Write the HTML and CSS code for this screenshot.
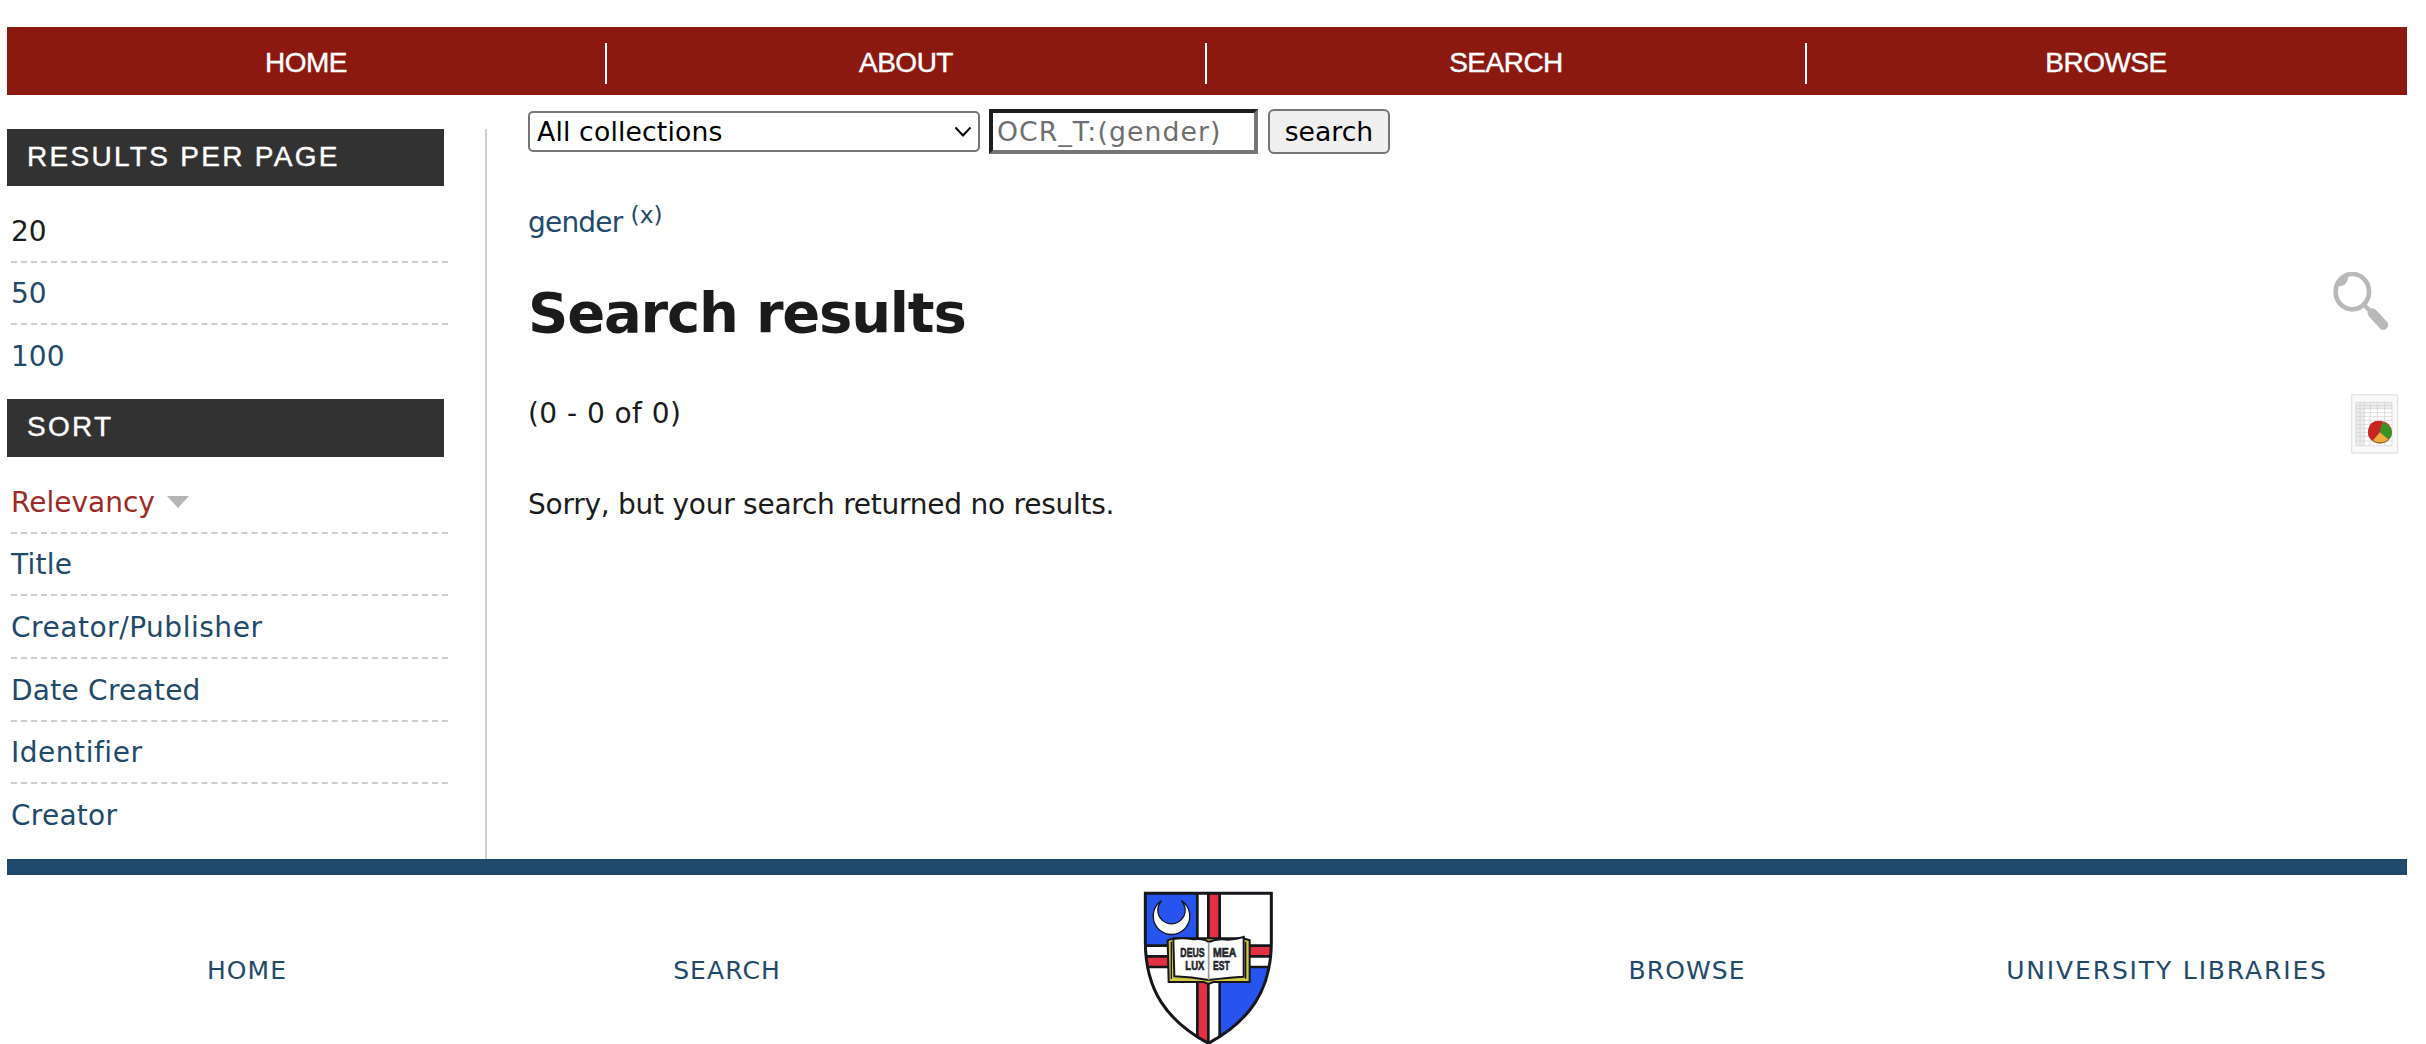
FILE: index.html
```html
<!DOCTYPE html>
<html lang="en">
<head>
<meta charset="utf-8">
<title>Search results</title>
<link rel="stylesheet" href="styles.css">
</head>
<body>
<nav class="top-nav">
  <a href="#">HOME</a><a href="#">ABOUT</a><a href="#">SEARCH</a><a href="#">BROWSE</a>
</nav>
<div class="page">
  <aside class="sidebar">
    <h2 class="bar">RESULTS PER PAGE</h2>
    <ul class="list list-count">
      <li class="plain">20</li>
      <li><a href="#">50</a></li>
      <li><a href="#">100</a></li>
    </ul>
    <h2 class="bar bar-sort">SORT</h2>
    <ul class="list list-sort">
      <li><a href="#" class="current">Relevancy</a><span class="arrow"></span></li>
      <li><a href="#">Title</a></li>
      <li><a href="#" class="wide">Creator/Publisher</a></li>
      <li><a href="#">Date Created</a></li>
      <li><a href="#" class="wide">Identifier</a></li>
      <li><a href="#">Creator</a></li>
    </ul>
  </aside>
  <main class="main">
    <form class="search-form">
      <div class="select" role="combobox" aria-label="Collection"><span>All collections</span>
        <svg width="18" height="12" viewBox="0 0 18 12"><path d="M1.5 1.5 9 9.5 16.5 1.5" fill="none" stroke="#000" stroke-width="2"/></svg>
      </div>
      <input class="query" type="text" placeholder="OCR_T:(gender)">
      <button class="submit" type="button">search</button>
    </form>
    <p class="term"><a href="#">gender <sup>(x)</sup></a></p>
    <h1>Search results</h1>
    <p class="range">(0 - 0 of 0)</p>
    <p class="message">Sorry, but your search returned no results.</p>
  </main>
  <div class="tools">
    <svg class="tool-search" width="60" height="60" viewBox="66 65 180 180">
      <g fill="none" stroke="#b8baba">
        <ellipse cx="127" cy="124" rx="50" ry="53" stroke-width="14"/>
        <path d="M163 164 186 188" stroke-width="12"/>
        <path d="M187 188 220 224" stroke-width="29" stroke-linecap="round"/>
      </g>
      <path d="M80 103C90 84 102 76 117 74Q115 82 113 88Q109 102 97 106Q88 109 82 107Z" fill="#b8baba"/>
    </svg>
    <svg class="tool-chart" width="50" height="62" viewBox="121 432 150 186">
      <rect x="126" y="437" width="138" height="175" rx="3" fill="#f9f9f9" stroke="#e4e4e4" stroke-width="4"/>
      <rect x="138" y="459" width="109" height="131" fill="#fff"/>
      <path d="M138 460h26v130h-26zM138 460h109v19H138z" fill="#ededed"/>
      <path d="M139 460v130M151 460v130M164 460v130M182 460v130M203 460v130M225 460v130M247 460v130M138 460h109M138 470h109M138 479h109M138 491h109M138 502h109M138 514h109M138 526h109M138 538h109M138 550h109M138 562h109M138 576h109M138 590h109" stroke="#cfcfcf" stroke-width="2"/>
      <ellipse cx="211" cy="550" rx="36" ry="34" fill="#8d642b"/>
      <path d="M211 548 217 516Q180 512 176 542V557Q178 568 190 575Z" fill="#c92323"/>
      <path d="M211 548 219 522Q248 533 246 554Q244 566 235 571Z" fill="#319522"/>
      <path d="M211 550 236 571Q228 580 212 580Q197 580 190 574Z" fill="#efac3a"/>
    </svg>
  </div>
</div>
<footer class="footer">
  <a href="#">HOME</a>
  <a href="#">SEARCH</a>
  <svg class="crest" width="180" height="169" viewBox="-9 15 540 507">
    <defs><clipPath id="shield"><path d="M76 70H454V215C454 360 390 452 265 520C140 452 76 360 76 215Z"/></clipPath></defs>
    <g clip-path="url(#shield)">
      <rect x="70" y="60" width="390" height="465" fill="#fff"/>
      <path d="M70 60H232V227H70zM299 291H460V525H299z" fill="#2754ef"/>
      <path d="M265 60H299V227H265zM232 330H265V525H232zM70 259H160V291H70zM370 227H460V259H370z" fill="#e23142"/>
      <path d="M232 60V227M265 60V227M299 60V227M232 330V525M265 330V525M299 330V525M70 227H160M70 259H160M70 291H160M370 227H460M370 259H460M370 291H460" fill="none" stroke="#15171c" stroke-width="8"/>
    </g>
    <path d="M76 70H454V215C454 360 390 452 265 520C140 452 76 360 76 215Z" fill="none" stroke="#15171c" stroke-width="9"/>
    <path d="M125 92A55 55 0 1 0 184 92A41 41 0 1 1 125 92Z" fill="#fff" stroke="#15171c" stroke-width="4"/>
    <path d="M143 211 160 205H370L389 211V336H280L265 342 250 336H146Z" fill="#d2ca42" stroke="#15171c" stroke-width="6"/>
    <path d="M154 215V326M377 215V326" stroke="#15171c" stroke-width="4"/>
    <path d="M160 207Q190 202 220 208Q250 204 266 216Q290 204 325 209Q350 208 371 201V320Q325 322 266 330Q215 321 163 319Z" fill="#fff" stroke="#15171c" stroke-width="6"/>
    <path d="M266 216V330" stroke="#999" stroke-width="5"/>
    <g class="motto">
      <text x="181" y="261" textLength="73" lengthAdjust="spacingAndGlyphs">DEUS</text>
      <text x="196" y="300" textLength="57" lengthAdjust="spacingAndGlyphs">LUX</text>
      <text x="279" y="261" textLength="70" lengthAdjust="spacingAndGlyphs">MEA</text>
      <text x="279" y="300" textLength="50" lengthAdjust="spacingAndGlyphs">EST</text>
    </g>
  </svg>
  <a href="#">BROWSE</a>
  <a href="#" class="libraries">UNIVERSITY LIBRARIES</a>
</footer>
</body>
</html>
```
FILE: styles.css
```css
* { box-sizing: border-box; }
body {
  margin: 0;
  padding: 27px 19px 0 7px;
  height: 1044px;
  overflow: hidden;
  background: #fff;
  color: #1b1b1b;
  font: 28px/60px Verdana, "DejaVu Sans", sans-serif;
}
a { color: #1f4a6c; text-decoration: none; }
h1, h2, p, ul { margin: 0; padding: 0; }

.top-nav {
  display: flex;
  height: 68px;
  padding-top: 16px;
  background: #8c1910;
  font-family: "Liberation Sans", Arial, sans-serif;
  letter-spacing: -0.5px;
  -webkit-text-stroke: 0.4px #fff;
}
.top-nav a {
  width: 600px;
  height: 41px;
  line-height: 39px;
  border-right: 2px solid #fff;
  color: #fff;
  text-align: center;
}
.top-nav a:last-child { border-right-color: transparent; }

.page {
  display: grid;
  grid-template-columns: 480px 1fr 96px;
  height: 764px;
}
.sidebar {
  margin-top: 34px;
  border-right: 2px solid #cfcfca;
}
.bar {
  width: 437px;
  height: 57px;
  padding-left: 20px;
  background: #323232;
  color: #fff;
  font: 28px/56px "Liberation Sans", Arial, sans-serif;
  letter-spacing: 2.3px;
  -webkit-text-stroke: 0.4px #fff;
}
.bar-sort { height: 58px; }
.list {
  width: 437px;
  margin-left: 4px;
  padding-top: 14px;
  list-style: none;
}
.list-count { height: 213px; }
.list-sort { letter-spacing: 0.25px; }
.list li {
  display: flex;
  align-items: center;
  height: 62.7px;
  padding-top: 2.6px;
  border-bottom: 2px dashed #cfcfca;
}
.list-count li { height: 62.5px; }
.list li:last-child { border-bottom-color: transparent; }
.list .current { color: #9e2a26; letter-spacing: 0; }
.list .wide { letter-spacing: 0.53px; }
.arrow {
  margin: 0 0 2px 12px;
  border: solid transparent;
  border-width: 12px 11px 0;
  border-top-color: #b5b5b5;
}

.main { padding: 14px 0 0 41px; }
.search-form {
  display: flex;
  align-items: center;
  height: 45px;
  font-size: 26.67px;
}
.select {
  display: flex;
  align-items: center;
  justify-content: space-between;
  width: 452px;
  height: 41px;
  padding: 0 6px 0 7px;
  border: 2px solid #767676;
  border-radius: 5px;
  color: #000;
  line-height: 38px;
  letter-spacing: 0.15px;
}
.query, .submit {
  height: 45px;
  margin: 0;
  font: inherit;
}
.query {
  width: 269px;
  margin: 0 10px 0 9px;
  padding: 1px 0 0 4px;
  border: 4px solid;
  border-color: #1e1e1e #767676 #767676 #1e1e1e;
  color: #757575;
  letter-spacing: 1.1px;
}
.query::placeholder { color: #6f6f6f; opacity: 1; }
.submit {
  width: 122px;
  padding: 0;
  border: 2px solid #767676;
  border-radius: 6px;
  background: #efefef;
  color: #000;
  line-height: 41px;
}
.term {
  height: 60px;
  margin-top: 39px;
  letter-spacing: -0.8px;
}
.term sup {
  font-size: 23.3px;
  line-height: 0;
  vertical-align: 9px;
  letter-spacing: 0;
}
h1 {
  height: 80px;
  margin-top: 20px;
  font-size: 56px;
  line-height: 80px;
  letter-spacing: -1.2px;
}
.range { margin-top: 31px; letter-spacing: 0.45px; }
.message { margin-top: 31px; letter-spacing: -0.25px; }

.tools {
  display: flex;
  flex-direction: column;
  align-items: flex-end;
  padding-top: 177px;
}
.tool-search { margin-right: 15px; }
.tool-chart { margin: 61px 7px 0 0; }

.footer {
  display: grid;
  grid-template-columns: repeat(5, 480px);
  justify-items: center;
  border-top: 16px solid #1f4a6c;
  font-size: 25px;
  line-height: 192px;
  letter-spacing: 1.1px;
}
.libraries { letter-spacing: 1.85px; }
.crest { display: block; }
.motto {
  fill: #26262a;
  stroke: #26262a;
  stroke-width: 2;
  font: bold 40px "Liberation Sans", Arial, sans-serif;
  letter-spacing: 0;
}
```
